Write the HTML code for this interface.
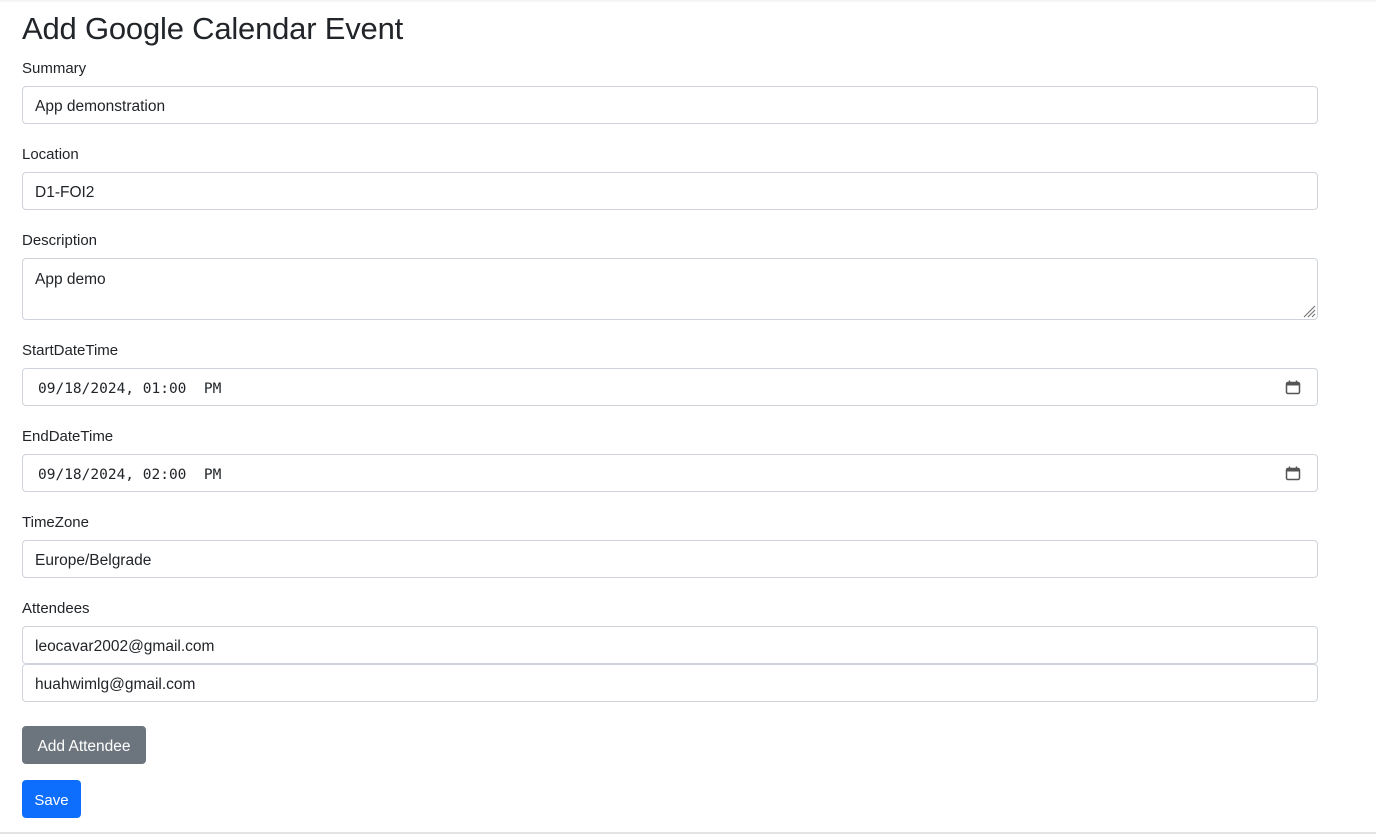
<!DOCTYPE html>
<html><head><style>
body{margin:0;width:1376px;height:834px;position:relative;font-family:"Liberation Sans",sans-serif;color:#212529;background:#fff;overflow:hidden}
.a{position:absolute}
h1{position:absolute;left:22px;top:11px;margin:0;font-size:31px;font-weight:400;letter-spacing:-0.2px}
.l{position:absolute;left:22px;font-size:15px;line-height:20px}
.i{position:absolute;left:22px;width:1294px;height:36px;border:1px solid #ced4da;border-radius:4px;font-size:15.5px;line-height:40px;text-indent:12px;box-sizing:content-box}
.b{position:absolute;left:22px;height:38px;border-radius:4px;color:#fff;font-size:15.5px;line-height:41px;text-align:center}
</style></head><body>
<div class="a" style="left:0;top:0;width:1376px;height:3px;background:linear-gradient(#f0f0f0,#fff)"></div>
<h1>Add Google Calendar Event</h1>
<div class="l" style="top:59px">Summary</div>
<div class="i" style="top:86px">App demonstration</div>
<div class="l" style="top:145px">Location</div>
<div class="i" style="top:172px">D1-FOI2</div>
<div class="l" style="top:231px">Description</div>
<div class="i" style="top:258px;height:60px;line-height:41px">App demo
<svg class="a" style="right:1px;bottom:1px" width="14" height="14"><path d="M13 2L2 13M13 6L6 13M13 10L10 13" stroke="#777" stroke-width="1.2"/></svg></div>
<div class="l" style="top:341px">StartDateTime</div>
<div class="i" style="top:368px;font-family:'DejaVu Sans Mono','Liberation Mono',monospace;font-size:14.5px;text-indent:15px">09/18/2024, 01:00&nbsp; PM
<svg class="a" style="left:1262px;top:10px" width="16" height="16"><rect x="1.5" y="3.5" width="13" height="11" rx="1.5" fill="none" stroke="#555" stroke-width="1.5"/><rect x="1.5" y="3.5" width="13" height="3" fill="#555"/><path d="M4.5 1.5v2M11.5 1.5v2" stroke="#555" stroke-width="1.5"/></svg></div>
<div class="l" style="top:427px">EndDateTime</div>
<div class="i" style="top:454px;font-family:'DejaVu Sans Mono','Liberation Mono',monospace;font-size:14.5px;text-indent:15px">09/18/2024, 02:00&nbsp; PM
<svg class="a" style="left:1262px;top:10px" width="16" height="16"><rect x="1.5" y="3.5" width="13" height="11" rx="1.5" fill="none" stroke="#555" stroke-width="1.5"/><rect x="1.5" y="3.5" width="13" height="3" fill="#555"/><path d="M4.5 1.5v2M11.5 1.5v2" stroke="#555" stroke-width="1.5"/></svg></div>
<div class="l" style="top:513px">TimeZone</div>
<div class="i" style="top:540px">Europe/Belgrade</div>
<div class="l" style="top:599px">Attendees</div>
<div class="i" style="top:626px">leocavar2002@gmail.com</div>
<div class="i" style="top:664px">huahwimlg@gmail.com</div>
<div class="b" style="top:726px;width:124px;background:#6c757d">Add Attendee</div>
<div class="b" style="top:780px;width:59px;background:#0d6efd;font-size:15px">Save</div>
<div class="a" style="left:0;top:832px;width:1376px;height:2px;background:#e3e3e3"></div>
</body></html>
